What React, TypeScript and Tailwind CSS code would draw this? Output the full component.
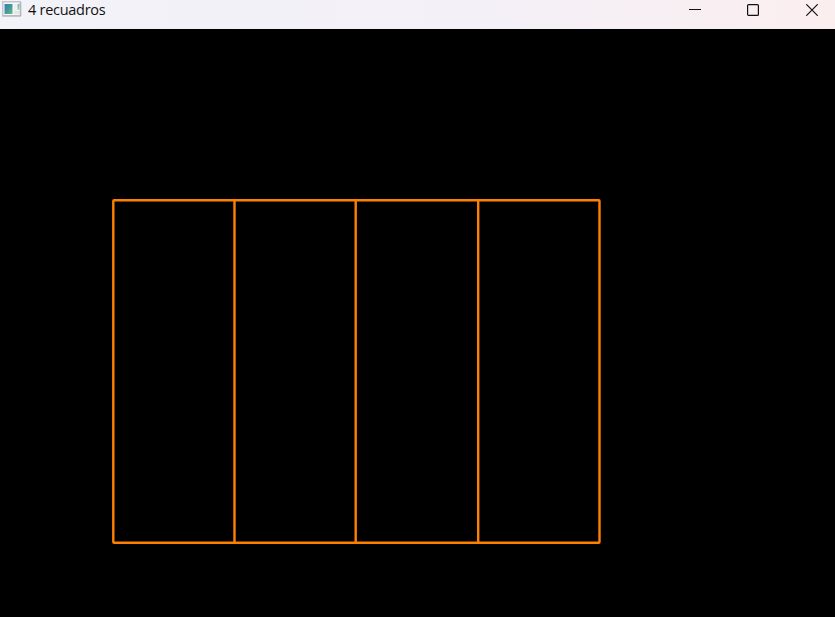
function WindowIcon() {
  return (
    <svg width="20" height="16" viewBox="0 0 20 16" aria-hidden="true">
      <defs>
        <linearGradient id="pane" x1="0" y1="0" x2="1" y2="1">
          <stop offset="0" stopColor="#3f7aae" />
          <stop offset="0.5" stopColor="#46979b" />
          <stop offset="1" stopColor="#68bd7c" />
        </linearGradient>
        <linearGradient id="strip" x1="0" y1="0" x2="0" y2="1">
          <stop offset="0" stopColor="#78aec0" />
          <stop offset="1" stopColor="#a9d3b0" />
        </linearGradient>
      </defs>
      <rect x="0.75" y="0.75" width="17.5" height="14" fill="#f7f9f9" stroke="#c3c6cd" strokeWidth="1.5" />
      <path d="M0.5 15H18.8V1" fill="none" stroke="#adb1b8" />
      <rect x="2.5" y="3" width="8" height="10" fill="url(#pane)" />
      <rect x="11.5" y="3" width="3.5" height="10" fill="#edf1ef" />
      <rect x="15.5" y="3" width="2" height="6" fill="url(#strip)" />
      <rect x="12" y="10" width="5.5" height="3" fill="#e1e7e5" />
    </svg>
  );
}

function WindowControls() {
  return (
    <div className="ml-auto flex items-center gap-[46px] pr-[17px]">
      <svg width="12" height="12" viewBox="0 0 12 12" aria-label="Minimizar">
        <path d="M0 5.5H12" stroke="#111" />
      </svg>
      <svg width="12" height="12" viewBox="0 0 12 12" aria-label="Maximizar">
        <rect x="0.6" y="0.6" width="10.8" height="10.8" rx="1" fill="none" stroke="#111" strokeWidth="1.2" />
      </svg>
      <svg width="12" height="12" viewBox="0 0 12 12" aria-label="Cerrar" className="ml-px">
        <path d="M0.3 0.3L11.7 11.7M11.7 0.3L0.3 11.7" stroke="#111" strokeWidth="1.2" />
      </svg>
    </div>
  );
}

function Drawing() {
  return (
    <svg width="835" height="588" viewBox="0 29 835 588" className="block">
      <g fill="none" stroke="#ff8000" strokeWidth="2.4" strokeLinejoin="round">
        <rect x="113.3" y="200.3" width="486.2" height="342.4" rx="0.8" />
        <path d="M234.5 200V543M355.7 200V543M478.2 200V543" />
      </g>
    </svg>
  );
}

export default function App() {
  return (
    <div className="flex h-[617px] w-[835px] flex-col overflow-hidden bg-black">
      <header className="flex h-[29px] shrink-0 items-start bg-linear-to-r from-[#f2f2f9] via-[#f4f0f7] via-60% to-[#fbeeef]">
        <div className="flex h-5 w-full items-center">
          <div className="-mt-0.5 ml-[2px]">
            <WindowIcon />
          </div>
          <h1 className="ml-1.5 font-['Open_Sans','Noto_Sans',sans-serif] text-[14.5px] leading-5 tracking-[-0.28px] text-[#111]">
            4 recuadros
          </h1>
          <WindowControls />
        </div>
      </header>
      <main className="flex-1 bg-black">
        <Drawing />
      </main>
    </div>
  );
}
